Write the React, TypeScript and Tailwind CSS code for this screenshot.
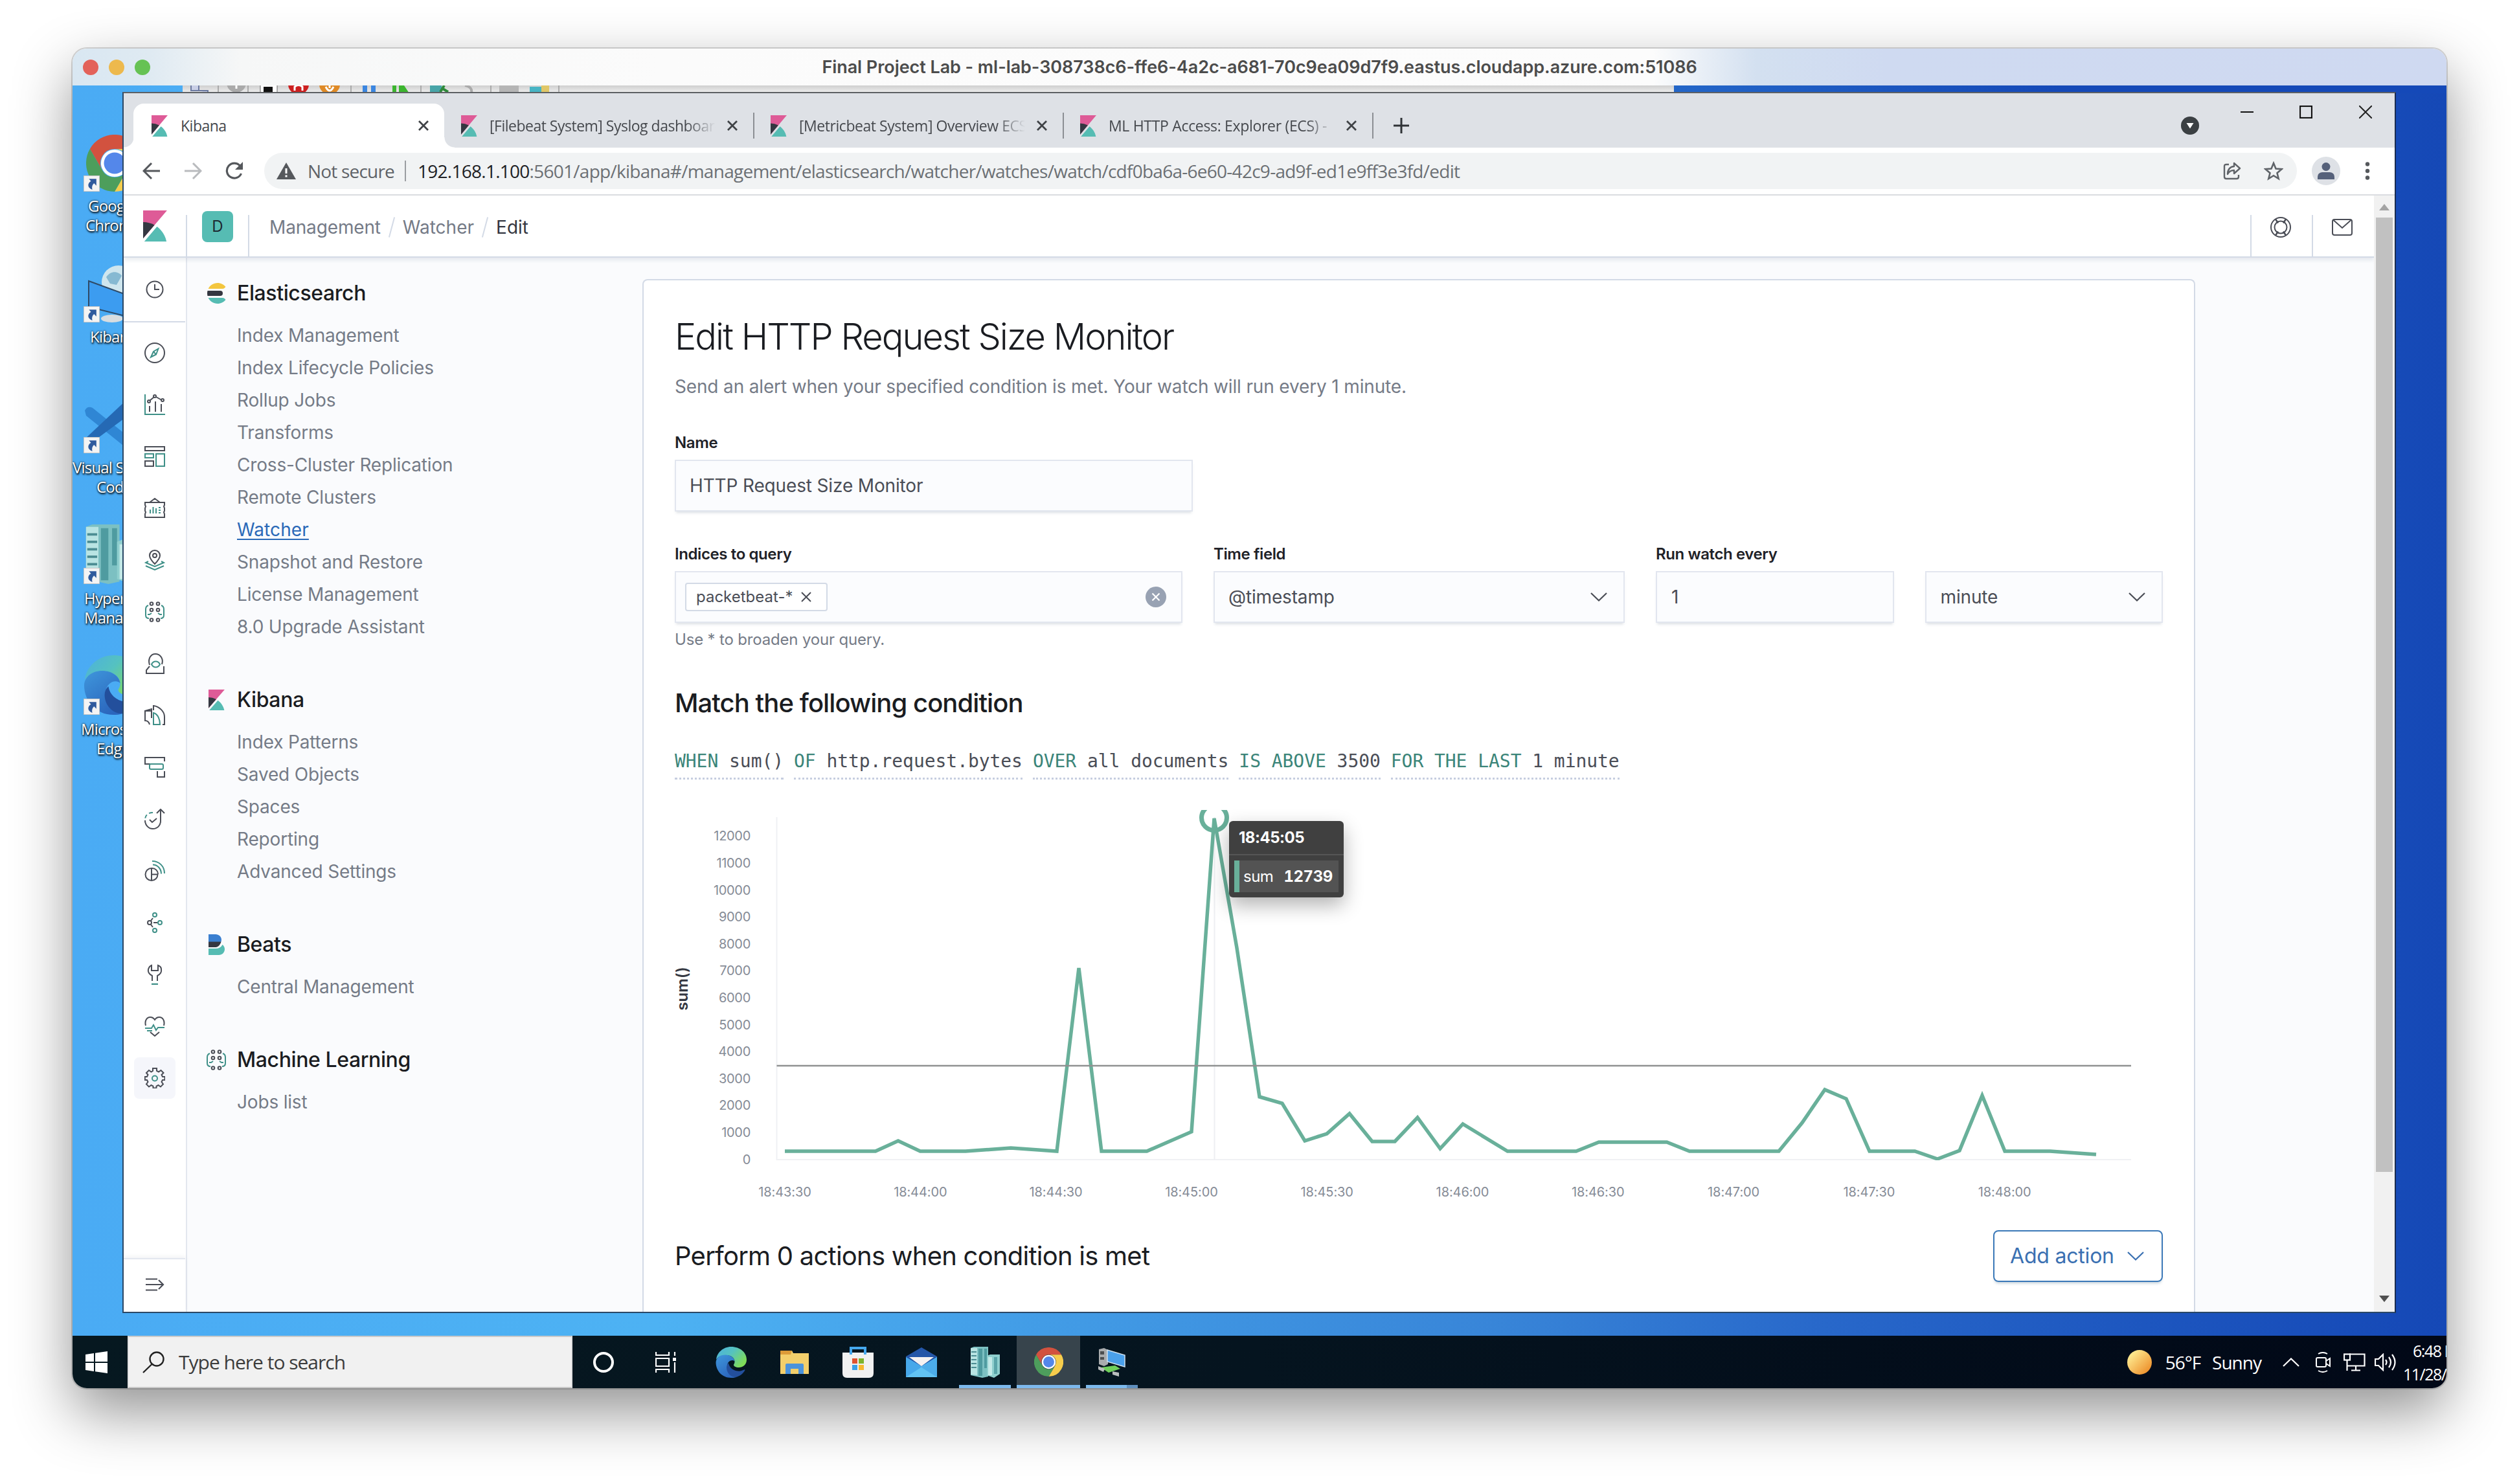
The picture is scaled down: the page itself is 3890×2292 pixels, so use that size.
import React, { ReactNode } from "react";

const DARK = "#4a4d56";
const TEAL = "#3f9088";

function KibanaLogo({ className }: { className: string }) {
  return (
    <svg viewBox="4 0 25 32" preserveAspectRatio="none" className={className}>
      <path d="M4 0v28.789L28.935.017z" fill="#de5b97" />
      <path d="M4 12v16.789l11.906-13.738A24.721 24.721 0 004 12z" fill="#343741" />
      <path d="M18.479 16.664L6.268 30.754l-1.073 1.237h23.191c-1.252-6.292-4.883-11.719-9.908-15.327" fill="#56bcb3" />
    </svg>
  );
}

function ElasticLogo() {
  return (
    <svg viewBox="0 0 32 32" className="h-8 w-8">
      <path d="M2 16c0 1.384.194 2.72.524 4H22a4 4 0 000-8H2.524A15.984 15.984 0 002 16" fill="#343741" />
      <path d="M28.924 7.662A15.381 15.381 0 0030.48 6C27.547 2.346 23.05 0 18 0 11.679 0 6.239 3.678 3.644 9H25.51a5.039 5.039 0 003.413-1.338" fill="#f3c63f" />
      <path d="M25.51 23H3.645C6.24 28.323 11.679 32 18 32c5.05 0 9.547-2.346 12.48-6a15.381 15.381 0 00-1.556-1.662A5.034 5.034 0 0025.51 23" fill="#56bcb3" />
    </svg>
  );
}

function BeatsLogo() {
  return (
    <svg viewBox="0 0 32 32" className="h-8 w-8">
      <path d="M4 0h11c5 0 9 4 9 8.500c0 1.200-.3 2.400-.9 3.500H4z" fill="#3a7fd0" />
      <path d="M4 11.500h19.500c-1.500 4.500-4.500 8.500-8.500 8.500H4z" fill="#343741" />
      <path d="M4 22h11c5 0 8.500-2 10.500-6 2 1.500 3.500 4 3.500 7 0 5-4 9-9 9H4z" fill="#56bcb3" />
    </svg>
  );
}

function ChromeLogo({ className }: { className: string }) {
  return (
    <svg viewBox="0 0 48 48" preserveAspectRatio="none" className={className}>
      <path d="M3.200 12A24 24 0 0 1 44.800 12H24A12 12 0 0 0 13.600 30Z" fill="#d2523f" />
      <path d="M24 12H44.800A24 24 0 0 1 24 48L34.400 30A12 12 0 0 0 24 12Z" fill="#f6cd4c" />
      <path d="M24 48A24 24 0 0 1 3.200 12L13.600 30A12 12 0 0 0 34.400 30Z" fill="#4d9e5c" />
      <circle cx="24" cy="24" r="11.500" fill="#fff" />
      <circle cx="24" cy="24" r="9" fill="#5487ea" />
    </svg>
  );
}

function EdgeLogo({ className }: { className: string }) {
  return (
    <svg viewBox="0 0 48 48" className={className}>
      <defs>
        <linearGradient id="edgeTop" x1="0" y1="0" x2="1" y2="0.600">
          <stop offset="0" stopColor="#4cb0de" />
          <stop offset="0.500" stopColor="#55c2c0" />
          <stop offset="1" stopColor="#7fdc58" />
        </linearGradient>
        <linearGradient id="edgeLow" x1="0" y1="0" x2="0.600" y2="1">
          <stop offset="0" stopColor="#3f97dc" />
          <stop offset="1" stopColor="#2b66bd" />
        </linearGradient>
      </defs>
      <path d="M1 20C2 9 12 0 24 0c14 0 24 9 24 20 0 8-6 12-12 12-5 0-8-2-8-4 0-1 1.500-2 1.500-5 0-6-6-10-13-10C9 13 3 16 1 20z" fill="url(#edgeTop)" />
      <path d="M.5 24C1 17 7 12.500 15 12.500c8 0 14 4.500 14.500 10C26 19 18 22 18 30c0 8 6 15 14 17-3 1-5.500 1-8 1C10 48 .5 37 .5 24z" fill="url(#edgeLow)" />
      <path d="M20 25c-2 2-3 4-3 7 0 8 6 15 14 15 6-1 12-6 14-10 1-1.500 0-2-1-1.500-3 1.500-6 2.500-10 2-8-1-13-6-14-12.500z" fill="#234f9c" />
    </svg>
  );
}

function ServersIcon({ className }: { className: string }) {
  return (
    <svg viewBox="0 0 48 48" className={className}>
      <path d="M2 2l5-2h22v46L20 48 2 44z" fill="#7cc0c2" />
      <path d="M2 2h10v42L2 43z" fill="#b9e4e3" />
      <path d="M14 3h6v42h-6zM23 3h4v30h-4z" fill="#4f9ba0" />
      <path d="M3 8h8M3 14h8M3 20h8M3 26h8M3 32h8" stroke="#4c8d93" strokeWidth="2" />
      <path d="M27 14l5-2h15v30l-9 6-11-4z" fill="#8fcfce" />
      <path d="M29 16h6v28h-6z" fill="#c4e9e7" />
      <path d="M38 16h5v26h-5z" fill="#5aa5a9" />
    </svg>
  );
}

const S = ({ children }: { children: ReactNode }) => (
  <svg viewBox="0 0 32 32" fill="none" stroke={DARK} strokeWidth="2" className="h-8 w-8">
    {children}
  </svg>
);

const MlIcon = () => (
  <S>
    <g>
      <circle cx="11" cy="3.500" r="2.300" /><circle cx="21" cy="3.500" r="2.300" />
      <circle cx="11" cy="13" r="2.300" /><circle cx="21" cy="13" r="2.300" />
      <circle cx="11" cy="28.500" r="2.300" /><circle cx="21" cy="28.500" r="2.300" />
    </g>
    <path d="M6 6C3 7 2 9 2 12v9c0 3 1 5 5 5M26 6c3 1 4 3 4 6v9c0 3-1 5-5 5M5 20h3l3-2M27 20h-3l-3-2" stroke={TEAL} />
  </S>
);

const RAIL: ReactNode[] = [
  <S><circle cx="16" cy="16" r="15" /><path d="M21.500 9.500l-3.500 9-8 4 4-8.500z" stroke={TEAL} /><path d="M14 14l4 4.500" stroke={TEAL} /></S>,
  <S><path d="M1 0v31h31" stroke={TEAL} /><path d="M8 27v-9M17 27V11M26 27V15" /><circle cx="7" cy="11" r="2" /><circle cx="16" cy="3" r="2" /><circle cx="28" cy="9" r="2" /><path d="M8.500 9.500l6-5M18 4l8 4.500" /></S>,
  <S><rect x="1" y="1" width="30" height="6" /><rect x="1" y="12" width="13" height="6" stroke={TEAL} /><rect x="18" y="12" width="13" height="19" stroke={TEAL} /><rect x="1" y="23" width="13" height="8" /></S>,
  <S><path d="M1 7h30v4l-1 2 1 3v4l-1 2 1 3v5H1v-5l1-3-1-2v-4l1-3-1-2zM8 7l8-6 8 6" /><path d="M9 24v-6M13.500 24V14M18 24v-8M22 15h3M22 19h3M22 23h3" stroke={TEAL} /></S>,
  <S><path d="M16 1c-5 0-8 4-8 8 0 5 8 13 8 13s8-8 8-13c0-4-3-8-8-8z" /><circle cx="16" cy="9" r="3" /><path d="M6 18l-4 2 14 6 14-6-4-2M2 25l14 6 14-6" stroke={TEAL} /></S>,
  <MlIcon />,
  <S><path d="M8 18C5 8 10 1 17 1s13 7 10 16M8 20l-5 6v5h27V20" /><path d="M11 17c3-6 10-6 13 0-3 6-10 6-13 0z" stroke={TEAL} /></S>,
  <S><path d="M11 9H1v15c3 0 6 2 7 6M1 9l10-3v14M14 8V1c9 1 17 9 17 17v12h-3" /><path d="M14 12c7 2 10 10 10 18H14z" stroke={TEAL} /></S>,
  <S><path d="M9 11H1V1h30v6" /><rect x="8" y="11" width="21" height="8" rx="2" stroke={TEAL} /><path d="M20 22v9h11V22" /></S>,
  <S><path d="M13 6C6 6 1 10 1 17" strokeDasharray="6 4" stroke={TEAL} /><path d="M1 18c0 7 5 13 12 13s12-5 12-12V2M19 7l6-6 6 6M8 17l4 4 7-6" /></S>,
  <S><path d="M11 12a9.500 9.500 0 1 0 9.500 9.500H11zM11 12v19" /><path d="M12 12c5 0 9 4 9 9" /><path d="M13 6.500c7 0 13 6 13 14M12 1c11 0 19 8 19 19" stroke={TEAL} /></S>,
  <S><circle cx="8" cy="16" r="3" /><path d="M14 16h6M10 13l3-4M10 19l3 4" /><circle cx="16" cy="4" r="3" stroke={TEAL} /><circle cx="24" cy="16" r="3" stroke={TEAL} /><circle cx="16" cy="28" r="3" stroke={TEAL} /></S>,
  <S><path d="M12 26v-8c-4-2-7-5-6-10 1-3 2-5 5-6v8h10V2c3 1 5 3 5 6 1 5-2 8-6 10v8" /><path d="M11 31h10" stroke={TEAL} strokeWidth="2.500" /></S>,
  <S><path d="M2 15C0 7 4 2 9 2c3 0 5 1 7 4 2-3 4-4 7-4 5 0 9 5 7 13M9 25l7 6 7-6" /><path d="M1 19h10l3-5 4 8 3-4h10M4 23h8" stroke={TEAL} /></S>,
  <S><path d="M13 1h6v4l3 1.500 3.500-2.500 4 4L26.500 11l1.500 3h3.500v5H28l-1.500 3 2.500 3.500-4 4-3.500-2.500-3 1.500v3h-5v-3l-3-1.500L7 29.500l-4-4L5.500 22 4 19H.8v-5H4l1.500-3L3 8l4-4 3.500 2.500L13 5z" /><circle cx="16" cy="16.500" r="4" stroke={TEAL} /></S>,
];

const GROUPS = [
  { title: "Elasticsearch", icon: <ElasticLogo />, links: ["Index Management", "Index Lifecycle Policies", "Rollup Jobs", "Transforms", "Cross-Cluster Replication", "Remote Clusters", "Watcher", "Snapshot and Restore", "License Management", "8.0 Upgrade Assistant"] },
  { title: "Kibana", icon: <KibanaLogo className="h-8 w-[25px]" />, links: ["Index Patterns", "Saved Objects", "Spaces", "Reporting", "Advanced Settings"] },
  { title: "Beats", icon: <BeatsLogo />, links: ["Central Management"] },
  { title: "Machine Learning", icon: <MlIcon />, links: ["Jobs list"] },
];

function TitleBar() {
  return (
    <div className="relative flex h-[57px] shrink-0 items-center justify-center bg-[linear-gradient(90deg,#d9e7f2_0px,#dfeaf2_120px,#f6f7f7_260px,#fbfbfb_900px,#fcfcfc_2440px,#d3e0f0_2600px,#cfdaf1_2800px,#cfd9f1_3666px)]">
      <div className="absolute left-4 top-[17px] flex gap-4">
        <div className="h-6 w-6 rounded-full bg-[#e3625a]" />
        <div className="h-6 w-6 rounded-full bg-[#edb94d]" />
        <div className="h-6 w-6 rounded-full bg-[#66c254]" />
      </div>
      <div className="whitespace-nowrap text-[27px] font-semibold leading-none tracking-[-0.06px] text-[#4c4c4c]">
        Final Project Lab - ml-lab-308738c6-ffe6-4a2c-a681-70c9ea09d7f9.eastus.cloudapp.azure.com:51086
      </div>
    </div>
  );
}

function ShortcutArrow() {
  return (
    <svg viewBox="0 0 24 24" className="absolute bottom-0 left-0 h-[25px] w-[25px]">
      <rect width="24" height="24" fill="#f4f4f4" stroke="#bbb" strokeWidth="1.500" />
      <path d="M8 5h11v10l-3.500-3.500C13 14 12 17 13 21 6 19 5 12 11 8.500z" fill="#2f5a9d" />
    </svg>
  );
}

const DESKTOP = [
  { top: "top-[76px]", icon: <ChromeLogo className="ml-1 h-[88px] w-[88px]" />, l1: "Google", l2: "Chrome", p: "pl-[24px]", p2: "pl-[20px]" },
  {
    top: "top-[278px]", icon: (
      <svg viewBox="0 0 96 88" className="h-[88px] w-[96px]">
        <circle cx="54" cy="26" r="26" fill="#cfe6ee" /><path d="M35 18c8-12 20-8 24-2l-8 14-10-2z" fill="#86b9d2" />
        <path d="M8 24l88 32v30L8 64z" fill="#3c9cf0" stroke="#2f4a66" strokeWidth="2" />
        <ellipse cx="44" cy="82" rx="17" ry="6" fill="#d8dde0" />
      </svg>
    ), l1: "Kibana", l2: "", p: "pl-[27px]", p2: "pl-0",
  },
  {
    top: "top-[480px]", icon: (
      <svg viewBox="0 0 96 88" className="h-[88px] w-[96px]">
        <path d="M2 22q4-8 12-4l82 66v20L4 30z" fill="#2f86d4" /><path d="M2 66L66 6v26L12 72q-8 2-10-6z" fill="#2569b4" />
      </svg>
    ), l1: "Visual Studio", l2: "Code", p: "pl-0", p2: "pl-[37px]",
  },
  { top: "top-[682px]", icon: <ServersIcon className="h-[92px] w-[92px]" />, l1: "Hyper-V", l2: "Manager", p: "pl-[18px]", p2: "pl-[18px]" },
  { top: "top-[884px]", icon: <EdgeLogo className="h-[92px] w-[92px]" />, l1: "Microsoft", l2: "Edge", p: "pl-[13px]", p2: "pl-[37px]" },
];

function DesktopIcons() {
  return (
    <>
      {DESKTOP.map((d) => (
        <div key={d.l1} className={`absolute left-0 w-[170px] ${d.top}`}>
          <div className="relative ml-[17px] flex h-[88px] items-end">
            {d.icon}
            <ShortcutArrow />
          </div>
          <div className={`mt-[7px] whitespace-nowrap font-['Open_Sans'] text-[24px] leading-[30px] tracking-[-0.8px] text-white [text-shadow:1px_2px_3px_#000,0_0_3px_#000] ${d.p}`}>{d.l1}</div>
          <div className={`whitespace-nowrap font-['Open_Sans'] text-[24px] leading-[30px] tracking-[-0.8px] text-white [text-shadow:1px_2px_3px_#000,0_0_3px_#000] ${d.p2}`}>{d.l2}</div>
        </div>
      ))}
    </>
  );
}

function RemoteToolbar() {
  return (
    <div className="absolute left-[170px] top-0 h-[12px] w-[2303px] overflow-hidden bg-[linear-gradient(#cfcfcf,#f1f1f1)]">
      <svg viewBox="282 132 590 12" className="h-3 w-[590px]">
        <path d="M295 132v8h12v-8M307 140h14v4" fill="#c9cfe6" stroke="#6c7aa0" strokeWidth="2" />
        <path d="M337 132v12M383 132v12M542 132v12M650 132v12M758 132v12M863 132v12" stroke="#9a9a9a" strokeWidth="1.500" />
        <circle cx="365" cy="128" r="15" fill="#aaa" /><path d="M365 130v7" stroke="#fff" strokeWidth="3" />
        <rect x="402" y="125" width="26" height="18" fill="#fff" stroke="#666" /><rect x="407" y="134" width="14" height="10" fill="#111" />
        <circle cx="461" cy="130" r="16" fill="#cc1f1f" /><path d="M455 140v-6q6-5 12 0v6" fill="none" stroke="#fff" strokeWidth="3" />
        <circle cx="509" cy="130" r="16" fill="#df8a26" /><path d="M503 134q6 12 12 0M509 130v6" fill="none" stroke="#fff" strokeWidth="3" />
        <path d="M560 132h7v12h-7zM573 132h7v12h-7z" fill="#3b86e0" />
        <path d="M606 132h6v12h-6zM616 132h8l8 12h-16z" fill="#3cb52f" />
        <path d="M664 132h18v12h-18z" fill="#48a5a8" /><path d="M682 136l10 6M686 132l-6 10" stroke="#2f8a3a" strokeWidth="4" />
        <path d="M718 132q12 2 10 12" fill="none" stroke="#aaa" strokeWidth="4" />
        <path d="M771 132h30v12h-30z" fill="#b5b5b5" />
        <path d="M818 134h20v10h-20z" fill="#47b4c4" /><path d="M836 132h12v12h-12z" fill="#e0c768" />
      </svg>
    </div>
  );
}

function CloseX({ className = "" }: { className?: string }) {
  return (
    <svg viewBox="0 0 16 16" className={`h-4 w-4 shrink-0 ${className}`}>
      <path d="M1 1l14 14M15 1L1 15" stroke="#3f4246" strokeWidth="2.800" />
    </svg>
  );
}

const TABS = [
  { t: "[Filebeat System] Syslog dashboard", ls: "tracking-[-0.5px]" },
  { t: "[Metricbeat System] Overview ECS", ls: "tracking-[-0.45px]" },
  { t: "ML HTTP Access: Explorer (ECS) -", ls: "tracking-[-0.32px]" },
];

function TabStrip() {
  return (
    <div className="flex h-[84px] items-end bg-[#dee1e6] font-['Open_Sans'] text-[23px] text-[#45484d]">
      <div className="h-4 w-[15px] bg-[radial-gradient(circle_at_0_0,#dee1e6_15px,#fff_16px)]" />
      <div className="flex h-[68px] w-[480px] items-center rounded-t-2xl bg-white pl-[28px]">
        <KibanaLogo className="h-[33px] w-[25px]" />
        <span className="ml-[20px] leading-none tracking-[-0.5px]">Kibana</span>
        <CloseX className="ml-auto mr-[24px]" />
      </div>
      <div className="h-4 w-[16px] bg-[radial-gradient(circle_at_16px_0,#dee1e6_15px,#fff_16px)]" />
      {TABS.map((tab) => (
        <div key={tab.t} className="flex h-[68px] w-[478px] items-center pl-[10px]">
          <KibanaLogo className="h-[33px] w-[25px] shrink-0" />
          <span className={`ml-[19px] w-[350px] shrink-0 overflow-hidden whitespace-nowrap leading-[32px] [mask-image:linear-gradient(90deg,#000_305px,transparent_349px)] ${tab.ls}`}>{tab.t}</span>
          <CloseX className="ml-[17px]" />
          <div className="ml-[24px] h-10 w-[2px] bg-[#8b8e93]" />
        </div>
      ))}
      <div className="flex h-[68px] items-center pl-[16px]">
        <svg viewBox="0 0 24 24" className="h-6 w-6"><path d="M12 0v24M0 12h24" stroke="#2f3236" strokeWidth="3" /></svg>
      </div>
      <div className="ml-auto flex h-[84px] items-start pr-[35px]">
        <svg viewBox="0 0 28 28" className="mt-[36px] h-7 w-7"><circle cx="14" cy="14" r="14" fill="#3b4043" /><path d="M8.500 10h11L14 18.500z" fill="#fff" /></svg>
        <svg viewBox="0 0 20 20" className="ml-[64px] mt-[19px] h-5 w-5"><path d="M0 10h20" stroke="#111" strokeWidth="2.200" /></svg>
        <svg viewBox="0 0 20 20" className="ml-[71px] mt-[19px] h-5 w-5"><rect x="1" y="1" width="18" height="18" fill="none" stroke="#111" strokeWidth="2.200" /></svg>
        <svg viewBox="0 0 20 20" className="ml-[72px] mt-[19px] h-5 w-5"><path d="M0 0l20 20M20 0L0 20" stroke="#222" strokeWidth="2" /></svg>
      </div>
    </div>
  );
}

function Toolbar() {
  return (
    <div className="flex h-[74px] items-center border-b-2 border-[#dadce0] bg-white font-['Open_Sans']">
      <svg viewBox="0 0 28 28" className="ml-[29px] h-7 w-7" fill="none" stroke="#55585c" strokeWidth="3"><path d="M27 14H3M14 2L2 14l12 12" /></svg>
      <svg viewBox="0 0 28 28" className="ml-[36px] h-7 w-7" fill="none" stroke="#b9bbbe" strokeWidth="3"><path d="M1 14h24M14 2l12 12-12 12" /></svg>
      <svg viewBox="0 0 28 28" className="ml-[36px] h-7 w-7" fill="none" stroke="#55585c" strokeWidth="3.200"><path d="M24.500 18A11.500 11.500 0 1 1 22.500 6" /><path d="M27 0v12H15l5-5z" fill="#55585c" stroke="none" /></svg>
      <div className="ml-[32px] flex h-14 w-[3139px] items-center rounded-full bg-[#f1f3f4] text-[28px] leading-none">
        <svg viewBox="0 0 30 26" className="ml-[19px] h-[26px] w-[30px]"><path d="M15 0l15 26H0z" fill="#55585c" /><path d="M15 9v8M15 19.500v3" stroke="#fff" strokeWidth="3" /></svg>
        <span className="ml-[18px] whitespace-nowrap tracking-[-0.8px] text-[#5f6368]">Not secure</span>
        <div className="ml-[16px] h-8 w-[2px] bg-[#9a9da1]" />
        <span className="ml-[18px] whitespace-nowrap tracking-[-0.735px] text-[#6c7074]">
          <span className="text-[#202124]">192.168.1.100</span>
          :5601/app/kibana#/management/elasticsearch/watcher/watches/watch/cdf0ba6a-6e60-42c9-ad9f-ed1e9ff3e3fd/edit
        </span>
        <svg viewBox="0 0 28 28" className="ml-auto h-7 w-7" fill="none" stroke="#5f6368" strokeWidth="2.400"><path d="M9 4H5q-3 0-3 3v16q0 3 3 3h16q3 0 3-3v-3" /><path d="M17 2l9 8-9 8v-5c-5 0-8 2-10 6 0-7 4-12 10-12z" strokeLinejoin="round" /></svg>
        <svg viewBox="0 0 30 30" className="ml-[35px] mr-[21px] h-[30px] w-[30px]" fill="none" stroke="#5f6368" strokeWidth="2.600"><path d="M15 3l3.500 8.500 9 .7-7 6 2.200 8.800L15 22.200 7.300 27l2.200-8.800-7-6 9-.7z" /></svg>
      </div>
      <div className="ml-[23px] flex h-11 w-11 items-center justify-center rounded-full bg-[#dee1e6]">
        <svg viewBox="0 0 26 26" className="h-[26px] w-[26px]" fill="#56617a"><circle cx="13" cy="6.500" r="6.500" /><path d="M0 26v-4q0-6 7-7h12q7 1 7 7v4z" /></svg>
      </div>
      <svg viewBox="0 0 8 28" className="ml-[38px] h-7 w-2" fill="#55585c"><circle cx="4" cy="3.500" r="3.200" /><circle cx="4" cy="14" r="3.200" /><circle cx="4" cy="24.500" r="3.200" /></svg>
    </div>
  );
}

function Slash() {
  return <div className="h-8 w-[2px] rotate-[15deg] bg-[#d3dae6]" />;
}

function KibanaHeader() {
  return (
    <div className="relative z-10 flex h-24 shrink-0 items-center border-b-2 border-[#d3dae6] bg-white shadow-[0_4px_6px_rgba(152,162,179,0.2)]">
      <div className="flex w-24 justify-center"><KibanaLogo className="h-12 w-[37px]" /></div>
      <div className="h-16 w-[2px] self-end bg-[#d3dae6]" />
      <div className="flex w-[94px] justify-center pt-0.5">
        <div className="flex h-12 w-12 items-center justify-center rounded-lg bg-[#56bcb3] text-[24px] leading-none text-[#1d2b33]">D</div>
      </div>
      <div className="h-16 w-[2px] self-end bg-[#d3dae6]" />
      <div className="ml-[31px] flex items-center pt-1 text-[28px] leading-none text-[#757b87]">
        <span className="tracking-[-0.15px]">Management</span>
        <div className="mx-4"><Slash /></div>
        <span>Watcher</span>
        <div className="mx-4"><Slash /></div>
        <span className="text-[#343741]">Edit</span>
      </div>
      <div className="ml-auto h-16 w-[2px] self-end bg-[#d3dae6]" />
      <div className="flex w-[93px] justify-center pr-1 pt-1">
        <svg viewBox="0 0 32 32" className="h-8 w-8" fill="none" stroke="#4a4d56" strokeWidth="2"><circle cx="16" cy="16" r="15" /><circle cx="16" cy="16" r="9.500" /><path d="M8 3.500l4 6M24 3.500l-4 6M8 28.500l4-6M24 28.500l-4-6" strokeWidth="2.500" /></svg>
      </div>
      <div className="h-16 w-[2px] self-end bg-[#d3dae6]" />
      <div className="flex w-[94px] justify-center pr-1 pt-1">
        <svg viewBox="0 0 32 26" className="h-[26px] w-8" fill="none" stroke="#4a4d56" strokeWidth="2"><rect x="1" y="1" width="30" height="24" rx="3" /><path d="M2.500 2l13.500 12L29.500 2" /></svg>
      </div>
    </div>
  );
}

function Rail() {
  return (
    <div className="flex w-[98px] shrink-0 flex-col border-r-2 border-[#e3e7ef] bg-white pr-px">
      <div className="flex h-[100px] items-center justify-center border-b-2 border-[#d3dae6]">
        <svg viewBox="0 0 28 28" className="h-7 w-7" fill="none" stroke={DARK} strokeWidth="2"><circle cx="14" cy="14" r="12.500" /><path d="M14 6v8h7" /></svg>
      </div>
      <div className="flex flex-col items-center pt-[7px]">
        {RAIL.map((icon, i) => (
          <div key={i} className="flex h-20 items-center">
            <div className={`flex h-16 w-16 items-center justify-center rounded-lg ${i === 14 ? "bg-[#f5f6fb]" : ""}`}>{icon}</div>
          </div>
        ))}
      </div>
      <div className="mt-auto flex h-[83px] items-center justify-center border-t-2 border-[#e3e7ef] pb-[3px] shadow-[0_-2px_6px_rgba(152,162,179,0.15)]">
        <svg viewBox="0 0 30 20" className="h-5 w-[30px]" fill="none" stroke={DARK} strokeWidth="2.200"><path d="M1 1.500h18M1 10h26M1 18.500h18M21 3l7 7-7 7" /></svg>
      </div>
    </div>
  );
}

function SideNav() {
  return (
    <div className="w-[703px] shrink-0 pl-[29px] pt-[31px]">
      {GROUPS.map((g) => (
        <div key={g.title} className="mb-[63px]">
          <div className="flex h-12 items-center">
            <div className="flex w-8 justify-center">{g.icon}</div>
            <span className="ml-4 text-[32px] font-medium leading-none tracking-[-0.4px] text-[#1a1c21]">{g.title}</span>
          </div>
          <div className="mt-[16px] pb-px pl-12">
            {g.links.map((l) => (
              <div key={l} className="flex h-[50px] items-center">
                <span className={l === "Watcher" ? "text-[28px] leading-none tracking-[0.1px] text-[#2a69b8] underline decoration-2 underline-offset-4" : "text-[28px] leading-none tracking-[-0.18px] text-[#757b87]"}>{l}</span>
              </div>
            ))}
          </div>
        </div>
      ))}
    </div>
  );
}

function Label({ children }: { children: ReactNode }) {
  return <div className="h-6 whitespace-nowrap text-[24px] font-semibold leading-none tracking-[-0.4px] text-[#1f2228]">{children}</div>;
}

function Field({ className, children }: { className: string; children: ReactNode }) {
  return (
    <div className={`mt-[14px] flex h-20 items-center border-2 border-[#e2e6ef] bg-[#fbfcfe] text-[28px] leading-none tracking-[-0.15px] text-[#4a4d56] shadow-[0_4px_4px_-2px_rgba(152,162,179,0.35)] ${className}`}>
      {children}
    </div>
  );
}

function Chevron({ className, color = "#4a4d56" }: { className: string; color?: string }) {
  return (
    <svg viewBox="0 0 26 14" className={`h-[14px] w-[26px] ${className}`} fill="none" stroke={color} strokeWidth="2.200">
      <path d="M1 1l12 11.500L25 1" />
    </svg>
  );
}

const EXPR = [
  ["WHEN", "sum()"],
  ["OF", "http.request.bytes"],
  ["OVER", "all documents"],
  ["IS ABOVE", "3500"],
  ["FOR THE LAST", "1 minute"],
];

const XL = ["18:43:30", "18:44:00", "18:44:30", "18:45:00", "18:45:30", "18:46:00", "18:46:30", "18:47:00", "18:47:30", "18:48:00"];
const POINTS =
  "1213,1778 1353,1778 1388,1762 1422,1778 1492,1778 1562,1773 1633,1778 1667,1495 1702,1778 1772,1778 1841,1748 1876,1264 1911,1464 1946,1694 1981,1704 2016,1762 2050,1751 2085,1720 2120,1763 2155,1763 2190,1726 2225,1774 2260,1736 2329,1778 2435,1778 2470,1764 2575,1764 2610,1778 2748,1778 2784,1734 2819,1683 2852,1697 2888,1778 2958,1778 2993,1790 3027,1777 3062,1692 3097,1778 3167,1778 3238,1783";

function Chart() {
  return (
    <div className="relative mt-4">
      <svg viewBox="1043 1220 2298 640" className="block h-[640px] w-[2298px] overflow-visible">
        <defs>
          <clipPath id="plot"><rect x="1190" y="1251" width="2102" height="541" /></clipPath>
        </defs>
        <path d="M1200.500 1262V1791H3292" fill="none" stroke="#f0f1f4" strokeWidth="2" />
        {Array.from({ length: 13 }, (_, i) => (
          <text key={i} x="1160" y={1797.500 - i * 41.600} textAnchor="end" fontSize="20" letterSpacing="-0.300" fill="#858b96">{i * 1000}</text>
        ))}
        {XL.map((t, i) => (
          <text key={t} x={1213 + i * 209.300} y="1848" textAnchor="middle" fontSize="20" letterSpacing="-0.100" fill="#858b96">{t}</text>
        ))}
        <text transform="translate(1063 1527) rotate(-90)" textAnchor="middle" fontSize="24" fontWeight="600" fill="#343741">sum()</text>
        <path d="M1876.500 1262V1791" stroke="#eeeff2" strokeWidth="2" />
        <g clipPath="url(#plot)">
          <polyline points={POINTS} fill="none" stroke="#69b09a" strokeWidth="5.500" />
          <circle cx="1876" cy="1263" r="19.500" fill="none" stroke="#69b09a" strokeWidth="7" />
        </g>
        <path d="M1200.500 1646H3292" stroke="#8f9191" strokeWidth="2.600" />
      </svg>
      <div className="absolute left-[856px] top-[48px] w-[177px] overflow-hidden rounded-md bg-[#404040] text-[24px] leading-none text-white shadow-[0_12px_30px_rgba(0,0,0,0.3)]">
        <div className="flex h-[53px] items-center border-b-2 border-[#555] pl-[15px] font-bold tracking-[-0.5px]">18:45:05</div>
        <div className="mx-[8px] mb-[8px] mt-[8px] flex h-[49px] items-center border-l-8 border-[#69b09a] bg-[#535353] pl-[6px]">
          <span className="tracking-[-0.5px]">sum</span>
          <span className="ml-[16px] font-bold tabular-nums tracking-[-0.4px]">12739</span>
        </div>
      </div>
    </div>
  );
}

function WatchPanel() {
  return (
    <div className="mt-[33px] w-[2398px] shrink-0 rounded-t-lg border-2 border-b-0 border-[#d3dae6] bg-white px-12">
      <div className="mt-[59px] h-14 whitespace-nowrap text-[56px] font-light leading-none tracking-[-1.970px] text-[#1a1c21]">Edit HTTP Request Size Monitor</div>
      <div className="mt-[35px] h-7 whitespace-nowrap text-[28px] leading-none tracking-[-0.155px] text-[#757b87]">Send an alert when your specified condition is met. Your watch will run every 1 minute.</div>
      <div className="mt-[61px]">
        <Label>Name</Label>
        <Field className="w-[800px] pl-[21px]">HTTP Request Size Monitor</Field>
      </div>
      <div className="mt-[54px] flex gap-12">
        <div className="w-[784px]">
          <Label>Indices to query</Label>
          <Field className="pl-[14px] pr-[23px]">
            <div className="flex h-11 w-[220px] items-center rounded border-2 border-[#d3dae6] bg-white pl-[15px] text-[24px] tracking-[0px]">
              packetbeat-*
              <svg viewBox="0 0 16 16" className="ml-[13px] h-4 w-4"><path d="M1 1l14 14M15 1L1 15" stroke="#4a4d56" strokeWidth="2" /></svg>
            </div>
            <svg viewBox="0 0 32 32" className="ml-auto h-8 w-8"><circle cx="16" cy="16" r="16" fill="#98a2b3" /><path d="M10.500 10.500l11 11M21.500 10.500l-11 11" stroke="#fff" strokeWidth="2.200" /></svg>
          </Field>
          <div className="mt-[14px] h-6 text-[24px] leading-none tracking-[-0.170px] text-[#757b87]">Use * to broaden your query.</div>
        </div>
        <div className="w-[635px]">
          <Label>Time field</Label>
          <Field className="justify-between pl-[21px] pr-[25px]">@timestamp<Chevron className="" /></Field>
        </div>
        <div className="flex-1">
          <Label>Run watch every</Label>
          <div className="grid grid-cols-2 gap-12">
            <Field className="pl-[22px]">1</Field>
            <Field className="justify-between pl-[22px] pr-[25px]">minute<Chevron className="" /></Field>
          </div>
        </div>
      </div>
      <div className="mt-[66px] h-10 text-[40px] font-medium leading-none tracking-[-0.940px] text-[#1a1c21]">Match the following condition</div>
      <div className="mt-[56px] flex gap-4 font-['DejaVu_Sans_Mono',monospace] text-[28px] leading-none tracking-[-0.056px]">
        {EXPR.map(([k, v]) => (
          <div key={k} className="h-[42px] whitespace-nowrap border-b-[3px] border-dotted border-[#c6cee0] text-[#4a4d56]">
            <span className="text-[#3b8579]">{k}</span> {v}
          </div>
        ))}
      </div>
      <Chart />
      <div className="mt-10 flex h-20 items-center justify-between">
        <span className="text-[40px] leading-none tracking-[-0.760px] text-[#1a1c21]">Perform 0 actions when condition is met</span>
        <div className="flex h-20 w-[262px] items-center rounded-lg border-2 border-[#3a78b8] pl-6 text-[32px] leading-none tracking-[-0.200px] text-[#3a70b2] shadow-[0_4px_4px_-2px_rgba(54,97,126,0.3)]">
          Add action
          <Chevron className="ml-[20px]" color="#3a70b2" />
        </div>
      </div>
    </div>
  );
}

function BrowserWindow() {
  return (
    <div className="absolute left-[77px] top-[10px] flex h-[1886px] w-[3511px] flex-col overflow-hidden border-2 border-t-[#5d6064] border-b-[#2b4866] border-l-[#2b4866] border-r-[#1a2c50] bg-white">
      <TabStrip />
      <Toolbar />
      <div className="flex min-h-0 flex-1">
        <div className="flex min-w-0 flex-1 flex-col overflow-hidden">
          <KibanaHeader />
          <div className="flex min-h-0 flex-1 bg-[#fafbfd]">
            <Rail />
            <SideNav />
            <WatchPanel />
          </div>
        </div>
        <div className="flex w-8 flex-col items-center bg-[#f1f1f1]">
          <svg viewBox="0 0 16 10" className="mt-[13px] h-[10px] w-4"><path d="M8 0l8 10H0z" fill="#a3a3a3" /></svg>
          <div className="mt-[11px] h-[1474px] w-[26px] bg-[#c1c1c1]" />
          <svg viewBox="0 0 16 10" className="mb-[15px] mt-auto h-[10px] w-4"><path d="M0 0h16L8 10z" fill="#505050" /></svg>
        </div>
      </div>
    </div>
  );
}

function TaskIcon({ children, className = "" }: { children: ReactNode; className?: string }) {
  return <div className={`relative flex h-full w-[98px] items-center justify-center ${className}`}>{children}</div>;
}

function Taskbar() {
  return (
    <div className="flex h-[81px] shrink-0 items-center bg-[linear-gradient(90deg,#061820,#05141f_50%,#010817)] font-['Open_Sans']">
      <div className="flex w-[85px] justify-center pr-[12px]">
        <svg viewBox="0 0 34 34" className="h-[34px] w-[34px]" fill="#fff"><path d="M0 5l13-2v13H0zM15 2.700L34 0v16H15zM0 18h13v13L0 29zM15 18h19v16l-19-2.700z" /></svg>
      </div>
      <div className="flex h-full w-[687px] items-center border-2 border-y-[#c9c9c9] border-x-[#e0e0e0] bg-[#f1f1f1]">
        <svg viewBox="0 0 34 34" className="ml-[21px] h-[34px] w-[34px]" fill="none" stroke="#222" strokeWidth="2.400"><circle cx="22" cy="12" r="10.500" /><path d="M15 19.500L1 33" /></svg>
        <span className="ml-[22px] whitespace-nowrap text-[30px] leading-none tracking-[-1px] text-[#3c3c3c]">Type here to search</span>
      </div>
      <div className="flex w-24 justify-center"><div className="h-8 w-8 rounded-full border-4 border-white" /></div>
      <div className="flex w-24 justify-center">
        <svg viewBox="0 0 32 32" className="h-8 w-8" fill="none" stroke="#fff" strokeWidth="2.200"><path d="M1 0v5h20V0M1 32v-5h20v5M1 10h20v12H1zM30 0v6M30 16v16" /><rect x="27" y="9" width="5" height="5" fill="#fff" stroke="none" /></svg>
      </div>
      <div className="ml-[4px] flex h-full">
        <TaskIcon><EdgeLogo className="h-12 w-12" /></TaskIcon>
        <TaskIcon>
          <svg viewBox="0 0 44 36" className="h-9 w-11"><path d="M0 0h18l2 4h24v32H0z" fill="#f3cf6b" /><path d="M0 0h18l-2 6H0z" fill="#dc9b38" /><path d="M8 36V22q0-2 2-2h24q2 0 2 2v14h-8v-8H16v8z" fill="#4b93dc" /></svg>
        </TaskIcon>
        <TaskIcon>
          <svg viewBox="0 0 48 48" className="h-12 w-12"><path d="M13 14V2h22v12" fill="none" stroke="#45a8ee" strokeWidth="4" /><path d="M0 9h48v32q0 7-7 7H7q-7 0-7-7z" fill="#f1f1f1" /><path d="M11 9h4v3h-4zM33 9h4v3h-4z" fill="#45a8ee" /><path d="M15 18h8v8h-8z" fill="#e0532f" /><path d="M25 18h8v8h-8z" fill="#7db42c" /><path d="M15 28h8v8h-8z" fill="#3a9fe8" /><path d="M25 28h8v8h-8z" fill="#f7b82f" /></svg>
        </TaskIcon>
        <TaskIcon>
          <svg viewBox="0 0 48 46" className="h-[46px] w-12"><path d="M0 14L24 0l24 14v32H0z" fill="#2456a8" /><path d="M0 15l24 14 24-14v31H0z" fill="#47a8ea" /><path d="M5 15h38L24 29z" fill="#f5f2f2" /><path d="M0 46l48-31v31z" fill="#62c3f3" /><path d="M24 31l24 15V15z" fill="#3391de" opacity="0.450" /></svg>
        </TaskIcon>
        <TaskIcon>
          <ServersIcon className="h-12 w-12" />
          <div className="absolute bottom-0 h-[5px] w-20 bg-[#7db9ec]" />
        </TaskIcon>
        <TaskIcon className="bg-[#37444c]">
          <ChromeLogo className="h-[45px] w-[45px]" />
          <div className="absolute bottom-0 h-[5px] w-[98px] bg-[#7db9ec]" />
        </TaskIcon>
        <TaskIcon>
          <svg viewBox="0 0 42 44" className="h-11 w-[42px]"><path d="M1 2l8-2 6 3v22l-6 3-8-3z" fill="#a9acae" /><path d="M3 5h6v5H3zM3 14h6v4H3z" fill="#4b4e50" /><path d="M14 3l27 8v18l-27-8z" fill="#4aa0ea" stroke="#cfe0ee" strokeWidth="1.500" /><path d="M4 30l12 8 18-6-8-5z" fill="#6fd05b" /><path d="M0 28l10 4-2 5-8-4zM22 36l10 2v6l-10-3z" fill="#b9bcbd" /></svg>
          <div className="absolute bottom-0 left-[9px] flex h-[5px] w-20"><div className="w-[63px] bg-[#7db9ec]" /><div className="w-[17px] bg-[#5f8fbd]" /></div>
        </TaskIcon>
      </div>
      <div className="ml-auto flex items-center text-white">
        <div className="h-[38px] w-[38px] rounded-full bg-[linear-gradient(135deg,#fde58a_20%,#ee9430_85%)]" />
        <span className="ml-[21px] whitespace-nowrap text-[28px] leading-none tracking-[-1px]">56°F</span>
        <span className="ml-[18px] whitespace-nowrap text-[28px] leading-none tracking-[-1px]">Sunny</span>
        <svg viewBox="0 0 26 14" className="ml-[33px] h-[14px] w-[26px]" fill="none" stroke="#fff" strokeWidth="2.200"><path d="M1 13L13 1.500 25 13" /></svg>
        <svg viewBox="0 0 24 32" className="ml-[25px] h-8 w-6" fill="none" stroke="#fff" strokeWidth="2"><rect x="1" y="9" width="15" height="14" rx="2" /><path d="M16 14l6-4v12l-6-4M4 3q7-4 14 0M4 29q7 4 14 0" /></svg>
        <svg viewBox="0 0 34 28" className="ml-[19px] h-7 w-[34px]" fill="none" stroke="#fff" strokeWidth="2.200"><path d="M9 1.500h23.500v18H6M19 20v6M12 26.500h14" /><rect x="1" y="1.500" width="9" height="9" /><path d="M5.500 11v16" /></svg>
        <svg viewBox="0 0 34 28" className="ml-[14px] h-7 w-[34px]" fill="none" stroke="#fff" strokeWidth="2.200"><path d="M1 9h5l7-7v24l-7-7H1zM17 10q3 4 0 8M22 6q6 8 0 16M27 2q9 12 0 24" /></svg>
        <div className="ml-[10px] h-[72px] w-[67px] text-[25px] leading-[36px] tracking-[-1.500px]">
          <div className="whitespace-nowrap pl-[15px]">6:48 P</div>
          <div className="whitespace-nowrap">11/28/</div>
        </div>
      </div>
    </div>
  );
}

export default function App() {
  return (
    <div className="h-[2292px] w-[3890px] overflow-hidden bg-white pl-[112px] pt-[75px] font-['Inter',sans-serif]">
      <div className="h-[2069px] w-[3666px] rounded-[22px] shadow-[0_36px_90px_rgba(0,0,0,0.43),0_0_0_2px_rgba(0,0,0,0.15)]">
        <div className="flex h-full w-full flex-col overflow-hidden rounded-[22px]">
          <TitleBar />
          <div className="relative flex-1 overflow-hidden bg-[linear-gradient(90deg,#4aabf4_0px,#4db2f3_900px,#429ce6_1500px,#3885d8_2200px,#2868ca_2700px,#1d56bf_3200px,#1548b6_3666px)]">
            <div className="absolute right-0 top-0 h-3 w-[1200px] bg-[linear-gradient(90deg,#2366c8,#1549b8_50%)]" />
            <RemoteToolbar />
            <DesktopIcons />
            <BrowserWindow />
          </div>
          <Taskbar />
        </div>
      </div>
    </div>
  );
}
